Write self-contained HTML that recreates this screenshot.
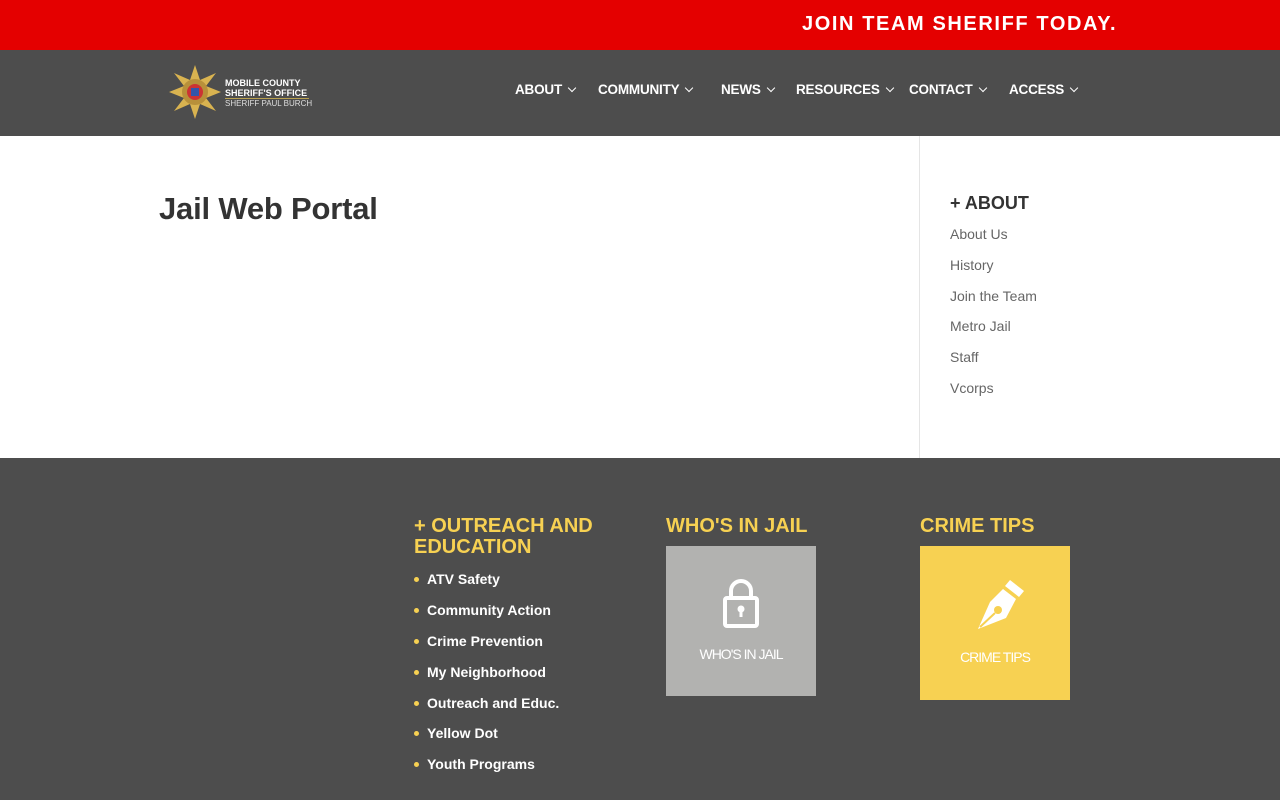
<!DOCTYPE html>
<html><head><meta charset="utf-8"><style>
*{margin:0;padding:0;box-sizing:border-box}
body{width:1280px;height:800px;overflow:hidden;font-family:"Liberation Sans",sans-serif;background:#fff;position:relative}
.top{position:absolute;left:0;top:0;width:1280px;height:50px;background:#e40000}
.top span{position:absolute;left:802px;top:13px;color:#fff;font-weight:bold;font-size:20px;letter-spacing:1.6px}
.hdr{position:absolute;left:0;top:50px;width:1280px;height:86px;background:#4d4d4d}
.nav{position:absolute;top:82px;color:#fff;font-weight:bold;font-size:13.5px;letter-spacing:-0.2px}
.nav span{position:absolute;white-space:nowrap}
.chev{display:inline-block;width:6px;height:6px;border-right:1.5px solid #fff;border-bottom:1.5px solid #fff;transform:rotate(45deg);margin-left:7px;position:relative;top:-3px}
h1{position:absolute;left:159px;top:191px;font-size:31px;color:#333;font-weight:bold;letter-spacing:-0.2px}
.side{position:absolute;left:919px;top:136px;width:1px;height:322px;background:#e5e5e5}
.sb h3{position:absolute;left:950px;top:193px;font-size:18px;color:#333}
.sb a{position:absolute;left:950px;font-size:14px;color:#666;text-decoration:none}
.foot{position:absolute;left:0;top:458px;width:1280px;height:342px;background:#4d4d4d}
.fh{position:absolute;color:#f7d152;font-weight:bold;font-size:20px;line-height:21px}
.li{position:absolute;left:414px;color:#fff;font-weight:bold;font-size:14px}
.li:before{content:"";display:inline-block;width:5px;height:5px;border-radius:50%;background:#f7d152;margin-right:8px;position:relative;top:-2px}
.box{position:absolute;color:#fff;font-size:14px;text-align:center;letter-spacing:-1px}
</style></head><body>
<div class="top"><span>JOIN TEAM SHERIFF TODAY.</span></div>
<div class="hdr">
<svg style="position:absolute;left:168px;top:14px" width="54" height="56" viewBox="0 0 54 56"><polygon points="27,1 32,16 48,9 38,22 53,28 38,34 48,47 32,40 27,55 22,40 6,47 16,34 1,28 16,22 6,9 22,16" fill="#d9b350"/><circle cx="27" cy="28" r="13" fill="#b8903a"/><circle cx="27" cy="28" r="8" fill="#c33"/><rect x="23" y="24" width="8" height="8" fill="#35a"/></svg>
<div style="position:absolute;left:225px;top:28px;color:#fff;font-weight:bold;font-size:9px;line-height:10px">MOBILE COUNTY<br>SHERIFF'S OFFICE</div>
<div style="position:absolute;left:225px;top:48px;width:84px;height:1px;background:#b8a050"></div>
<div style="position:absolute;left:225px;top:49px;color:#ddd;font-size:8px">SHERIFF PAUL BURCH</div>
</div>
<div class="nav">
<span style="left:515px">ABOUT<i class="chev"></i></span>
<span style="left:598px">COMMUNITY<i class="chev"></i></span>
<span style="left:721px">NEWS<i class="chev"></i></span>
<span style="left:796px">RESOURCES<i class="chev"></i></span>
<span style="left:909px">CONTACT<i class="chev"></i></span>
<span style="left:1009px">ACCESS<i class="chev"></i></span>
</div>
<h1>Jail Web Portal</h1>
<div class="side"></div>
<div class="sb"><h3>+ ABOUT</h3>
<a style="top:226px">About Us</a><a style="top:257px">History</a><a style="top:288px">Join the Team</a><a style="top:318px">Metro Jail</a><a style="top:349px">Staff</a><a style="top:380px">Vcorps</a></div>
<div class="foot"></div>
<div class="fh" style="left:414px;top:516px">+ OUTREACH AND<br>EDUCATION</div>
<div class="fh" style="left:666px;top:516px">WHO'S IN JAIL</div>
<div class="fh" style="left:920px;top:516px">CRIME TIPS</div>
<div class="li" style="top:571px">ATV Safety</div>
<div class="li" style="top:602px">Community Action</div>
<div class="li" style="top:633px">Crime Prevention</div>
<div class="li" style="top:664px">My Neighborhood</div>
<div class="li" style="top:695px">Outreach and Educ.</div>
<div class="li" style="top:725px">Yellow Dot</div>
<div class="li" style="top:756px">Youth Programs</div>
<div class="box" style="left:666px;top:546px;width:150px;height:150px;background:#b2b2b0">
<svg style="position:absolute;left:57px;top:32px" width="36" height="50" viewBox="0 0 36 50"><path d="M8 20V13a10 10 0 0 1 20 0v7" fill="none" stroke="#fff" stroke-width="4"/><rect x="2" y="20" width="32" height="28" rx="2" fill="none" stroke="#fff" stroke-width="4"/><circle cx="18" cy="31" r="3.5" fill="#fff"/><rect x="16.5" y="31" width="3" height="8" fill="#fff"/></svg>
<div style="position:absolute;top:100px;width:150px">WHO'S IN JAIL</div></div>
<div class="box" style="left:920px;top:546px;width:150px;height:154px;background:#f7d152">
<svg style="position:absolute;left:56px;top:34px" width="48" height="50" viewBox="0 0 48 50"><polygon points="34,0 48,11 43,17 29,6" fill="#fff"/><path d="M27 9 L40 19 L30 38 L2 49 L14 22 Z" fill="#fff"/><circle cx="22" cy="30" r="4" fill="#f7d152"/><line x1="4" y1="47" x2="19" y2="33" stroke="#f7d152" stroke-width="2"/></svg>
<div style="position:absolute;top:103px;width:150px">CRIME TIPS</div></div>
</body></html>
